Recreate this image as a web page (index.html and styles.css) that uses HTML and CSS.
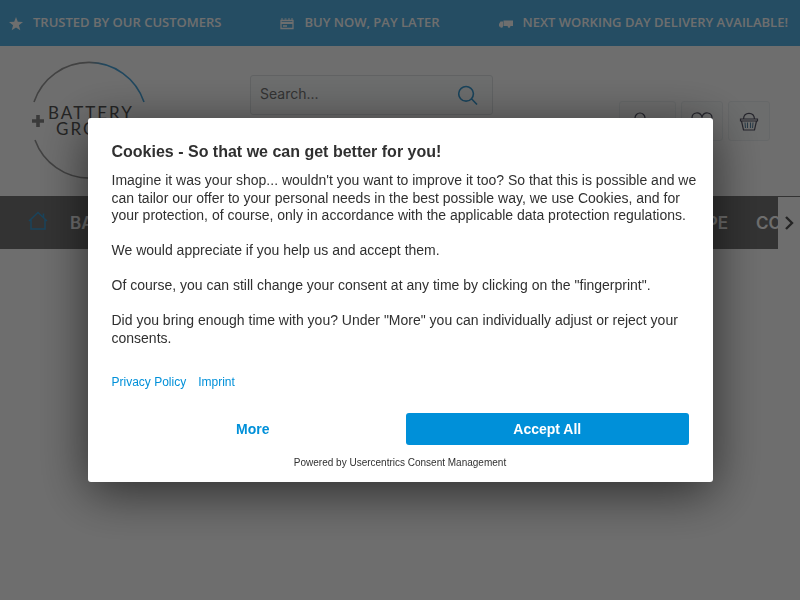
FILE: index.html
```
<!DOCTYPE html>
<html lang="en">

<head>
    <meta charset="UTF-8">
    <meta name="viewport" content="width=device-width, initial-scale=1.0">
    <title>Battery Group</title>
    <link rel="stylesheet" href="styles.css">
</head>

<body>
    <div class="usp-bar">
        <div class="usp">
            <svg width="14" height="14" viewBox="0 0 14 14"><path fill="currentColor" d="M7 0l1.800 4.800 5.200.3-4.100 3.200 1.400 5L7 10.500l-4.300 2.800 1.400-5L0 5.100l5.200-.3z"/></svg>
            <span>TRUSTED BY OUR CUSTOMERS</span>
        </div>
        <div class="usp">
            <svg width="14" height="14" viewBox="0 0 14 14"><path fill="none" stroke="currentColor" stroke-width="1.300" d="M1 3.500h12v8H1zM3 9h4"/><path fill="currentColor" d="M1 5h12v2H1zM1 1.500h2v1H1zM4.500 1.500h2v1h-2zM8 1.500h2v1H8zM11 1.500h2v1h-2z"/></svg>
            <span>BUY NOW, PAY LATER</span>
        </div>
        <div class="usp">
            <svg width="14" height="14" viewBox="0 0 14 14"><path fill="currentColor" d="M4.500 3.500H14V9H4.500zM0 7L1.500 4.500H4V9.500H0z"/><circle cx="2.500" cy="9.500" r="1.300" fill="currentColor"/><circle cx="10" cy="9.500" r="1.300" fill="currentColor"/></svg>
            <span>NEXT WORKING DAY DELIVERY AVAILABLE!</span>
        </div>
    </div>

    <header class="header">
        <a class="logo" href="#" aria-label="Battery Group">
            <svg width="116" height="120" viewBox="0 0 116 120">
                <defs>
                    <linearGradient id="ring" x1="0" x2="1">
                        <stop offset="0.500" stop-color="#999"/>
                        <stop offset="0.650" stop-color="#4ba6dc"/>
                    </linearGradient>
                </defs>
                <path d="M2 42A58 58 0 0 1 112 42" fill="none" stroke="url(#ring)" stroke-width="1.600"/>
                <path d="M3 80A58 58 0 0 0 112 80" fill="none" stroke="#999" stroke-width="1.600"/>
                <path d="M6 55v12M0 61h12" stroke="#888" stroke-width="3.600"/>
                <text x="16" y="59" class="logo-text">BATTERY</text>
                <text x="24" y="75" class="logo-text">GROUP</text>
            </svg>
        </a>
        <form class="search">
            <input type="search" placeholder="Search..." aria-label="Search">
            <button type="button" aria-label="Search">
                <svg width="20" height="20" viewBox="0 0 20 20"><path fill="none" stroke="currentColor" stroke-width="1.600" d="M15.300 8A7.300 7.300 0 1 1 .8 8a7.300 7.300 0 0 1 14.500 0zM13 13.300L19 19.500"/></svg>
            </button>
        </form>
        <div class="actions">
            <button class="account" aria-label="My account">
                <svg width="20" height="20" viewBox="0 0 20 20"><circle cx="9" cy="7" r="5"/><path d="M0 19c1-8 17-8 18 0"/></svg>
            </button>
            <button aria-label="Wish list">
                <svg width="22" height="20" viewBox="0 0 22 20"><path d="M11 19C4 13 1 10 1 7c0-6 8-7 10-1 2-6 10-5 10 1 0 3-3 6-10 12z"/></svg>
            </button>
            <button aria-label="Shopping cart">
                <svg width="20" height="20" viewBox="0 0 20 20"><path d="M1.500 8h17v2h-17zM2.500 10l2 9h11l2-9M4.500 8C5 .5 15 .5 15.500 8"/><path class="bars" d="M6 11.500l.5 5.500M8.500 11.500V17M11.500 11.500V17M14 11.500l-.5 5.500"/></svg>
            </button>
        </div>
    </header>

    <nav class="nav">
        <a class="home" href="#" aria-label="Home">
            <svg width="20" height="20" viewBox="0 0 20 20"><path fill="none" stroke="currentColor" stroke-width="1.500" d="M1 10L10 1.500l9 8.500M3 8.500v9.500h14V8.500M15.500 7V2.500"/></svg>
        </a>
        <a href="#">BATTERIES</a>
        <a class="push" href="#">BY TYPE</a>
        <a class="last" href="#">CO</a>
        <button class="next" aria-label="Next">
            <svg width="10" height="14" viewBox="0 0 10 14"><path fill="none" stroke="currentColor" stroke-width="2.400" d="M2 1l6 6-6 6"/></svg>
        </button>
    </nav>

    <div class="overlay">
        <div class="modal" role="dialog" aria-labelledby="cookieTitle">
            <h2 id="cookieTitle">Cookies - So that we can get better for you!</h2>
            <div class="text">
                <p>Imagine it was your shop... wouldn't you want to improve it too? So that this is possible and we can tailor our offer to your personal needs in the best possible way, we use Cookies, and for your protection, of course, only in accordance with the applicable data protection regulations.</p>
                <p>We would appreciate if you help us and accept them.</p>
                <p>Of course, you can still change your consent at any time by clicking on the "fingerprint".</p>
                <p>Did you bring enough time with you? Under "More" you can individually adjust or reject your consents.</p>
            </div>
            <div class="links">
                <a href="#">Privacy Policy</a>
                <a href="#">Imprint</a>
            </div>
            <div class="buttons">
                <button class="more">More</button>
                <button class="accept">Accept All</button>
            </div>
            <div class="powered">Powered by <a href="#">Usercentrics Consent Management</a></div>
        </div>
    </div>
</body>

</html>
```
FILE: styles.css
```
* {
    box-sizing: border-box;
}

body {
    margin: 0;
    background-color: white;
    font-family: Inter, "Open Sans", sans-serif;
    overflow: hidden;
}

button {
    font-family: inherit;
    padding: 0;
    border: none;
    cursor: pointer;
}

a {
    text-decoration: none;
}

svg {
    display: block;
}

.usp-bar {
    display: flex;
    justify-content: space-between;
    align-items: center;
    height: 46px;
    padding: 0 12px 3px 9px;
    background-color: #56b3e6;
    color: white;
    font-family: "Open Sans", sans-serif;
    font-size: 13px;
    font-weight: 600;
    white-space: nowrap;
}

.usp {
    display: flex;
    align-items: center;
    gap: 10px;
}

.usp svg {
    margin-top: 4px;
}

.header {
    display: flex;
    align-items: flex-start;
    height: 150px;
    padding: 14px 30px 0 32px;
}

.logo-text {
    font-family: Lato, sans-serif;
    font-size: 17px;
    letter-spacing: 2px;
    fill: #555;
}

.search {
    display: flex;
    align-items: center;
    width: 243px;
    height: 40px;
    margin: 15px 0 0 102px;
    padding: 0 14px 0 9px;
    border: 1px solid #e0e4e6;
    border-radius: 3px;
    background-color: #fbfcfc;
}

.search input {
    flex: 1;
    min-width: 0;
    padding: 0 0 3px;
    border: none;
    outline: none;
    background: none;
    font-family: inherit;
    font-size: 14px;
}

.search input::placeholder {
    color: #777;
}

.search button {
    background: none;
    color: #3b9cd4;
}

.actions {
    display: flex;
    gap: 5px;
    margin: 41px 0 0 auto;
}

.actions button {
    display: flex;
    align-items: center;
    justify-content: center;
    width: 42px;
    height: 40px;
    border: 1px solid #edf1f3;
    border-radius: 3px;
    background-color: #fbfcfc;
}

.actions .account {
    width: 57px;
    padding-right: 14px;
}

.actions svg {
    fill: none;
    stroke: #556;
    stroke-width: 1.2px;
}

.actions .bars {
    stroke: #5a84a3;
    stroke-width: 1px;
}

.nav {
    display: flex;
    align-items: center;
    height: 53px;
    padding-left: 28px;
    background-color: #777;
    font-size: 17px;
    font-weight: 600;
    white-space: nowrap;
}

.nav a {
    color: white;
}

.nav .home {
    margin-right: 22px;
    padding-bottom: 4px;
    color: #3b9cd4;
}

.nav .push {
    margin-left: auto;
}

.nav .last {
    width: 22px;
    margin-left: 28px;
    overflow: hidden;
}

.next {
    display: flex;
    align-items: center;
    justify-content: center;
    width: 22px;
    height: 52px;
    background-color: white;
    color: #555;
}

.overlay {
    position: fixed;
    inset: 0;
    display: flex;
    align-items: center;
    justify-content: center;
    background-color: rgba(0, 0, 0, 0.57);
    font-family: "Liberation Sans", Arial, sans-serif;
}

.modal {
    width: 90%;
    max-width: 625px;
    padding: 24px 24px 12px;
    border-radius: 3px;
    background-color: white;
    color: #303030;
    box-shadow: 0 10px 50px rgba(0, 0, 0, 0.6);
}

.modal h2 {
    margin: 0 0 10px;
    font-size: 16px;
    line-height: 20px;
}

.text {
    margin-right: -12px;
    font-size: 14px;
    line-height: 1.25;
}

.text p {
    margin: 0 0 1.25em;
}

.links {
    display: flex;
    gap: 12px;
    margin: 27px 0 23px;
    font-size: 12px;
    line-height: 16px;
}

.links a {
    color: #0090d9;
}

.buttons {
    display: flex;
    gap: 12px;
}

.buttons button {
    flex: 1;
    height: 32px;
    border-radius: 3px;
    font-size: 14px;
    font-weight: bold;
}

.buttons .more {
    background: none;
    color: #0090d9;
}

.buttons .accept {
    background-color: #0090d9;
    color: white;
}

.powered {
    margin-top: 11px;
    font-size: 10px;
    line-height: 14px;
    text-align: center;
}

.powered a {
    color: inherit;
}
```
